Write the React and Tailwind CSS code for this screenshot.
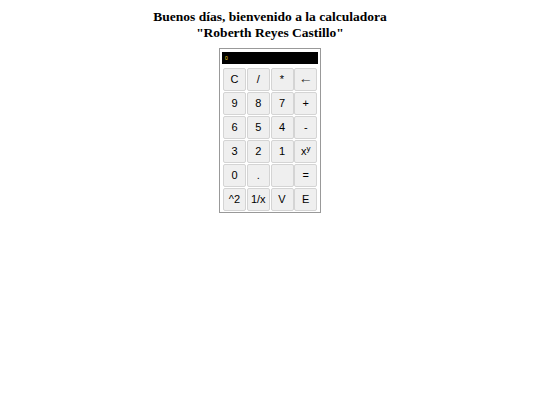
import React from 'react';

const rows = [
  ['C', '/', '*', '←'],
  ['9', '8', '7', '+'],
  ['6', '5', '4', '-'],
  ['3', '2', '1', 'xy'],
  ['0', '.', '', '='],
  ['^2', '1/x', 'V', 'E'],
];

const Key = ({ label }) => (
  <button className="w-[23px] h-[23px] flex items-center justify-center bg-[#efefef] border border-[#d4d4d4] rounded-[2px] text-[11px] text-black font-['Liberation_Sans',Arial,sans-serif] leading-none">
    {label === 'xy' ? (
      <span>
        x<sup className="text-[8px]">y</sup>
      </span>
    ) : label === '←' ? (
      <span className="text-[14px] leading-none text-[#333] relative -top-[2px]">←</span>
    ) : (
      label
    )}
  </button>
);

export default function App() {
  return (
    <div className="w-[540px] h-[405px] bg-white flex flex-col items-center">
      <h2 className="mt-[9px] text-center font-bold text-[13.5px] leading-[16px] text-black font-['Liberation_Serif','Times_New_Roman',serif]">
        Buenos días, bienvenido a la calculadora
        <br />
        "Roberth Reyes Castillo"
      </h2>
      <div className="mt-[7px] w-[102px] border border-[#999] p-[1px] flex flex-col">
        <div className="mx-[1px] mt-[2px] h-[12px] bg-black flex items-center px-[3px]">
          <span className="text-[5px] text-yellow-300 leading-none font-['Liberation_Sans',sans-serif]">0</span>
        </div>
        <div className="mt-[4px] px-[2px] grid grid-cols-4 gap-[1px]">
          {rows.flat().map((k, i) => (
            <Key key={i} label={k} />
          ))}
        </div>
      </div>
    </div>
  );
}
